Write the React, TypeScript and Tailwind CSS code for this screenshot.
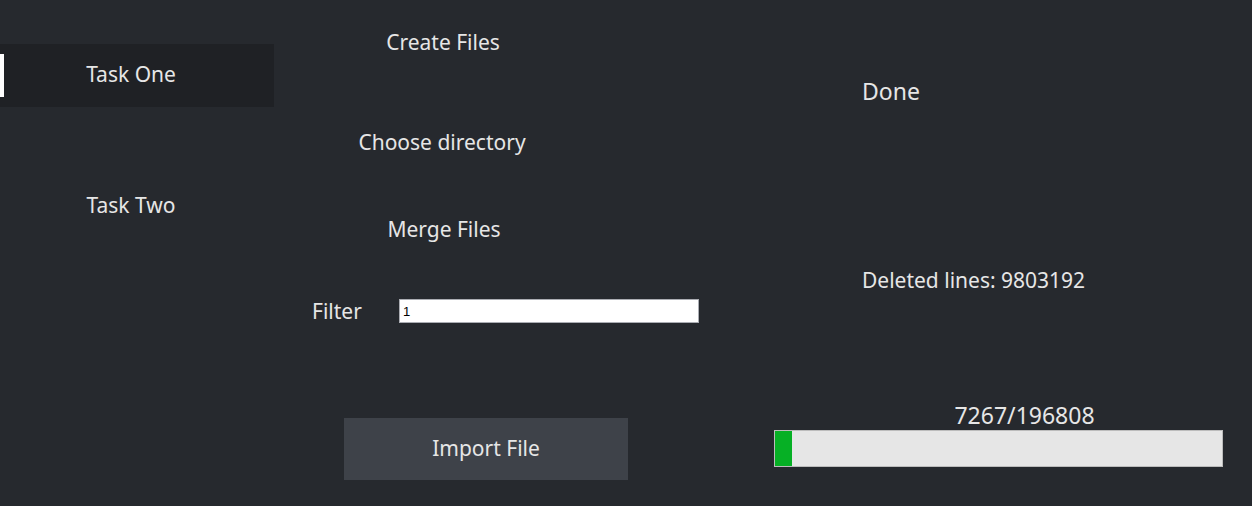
import { useState } from "react";

export default function App() {
  const [active, setActive] = useState(0);
  const [filter, setFilter] = useState("1");
  const done = 7267;
  const total = 196808;
  const pct = (done / total) * 100;

  const tasks = ["Task One", "Task Two"];

  return (
    <div
      className="flex h-[506px] w-[1252px] overflow-hidden bg-[#26292e] text-[#e6e6e6]"
      style={{ fontFamily: '"Noto Sans", "Open Sans", sans-serif' }}
    >
      {/* Sidebar */}
      <div className="flex w-[274px] shrink-0 flex-col gap-[68px] pt-[44px]">
        {tasks.map((t, i) => (
          <button
            key={t}
            type="button"
            onClick={() => setActive(i)}
            className={`relative flex h-[63px] items-center justify-center text-[21px] ${
              active === i ? "bg-[#1f2125]" : ""
            }`}
          >
            {active === i && <span className="absolute left-0 top-[10px] h-[43px] w-[4px] bg-white" />}
            <span className="-ml-[12px] -mt-[1px]">{t}</span>
          </button>
        ))}
      </div>

      {/* Middle column */}
      <div className="flex w-[500px] shrink-0 flex-col">
        <div className="w-[338px] pt-[28px] text-center text-[21px] leading-[28px]">Create Files</div>
        <div className="w-[336px] pt-[72px] text-center text-[21px] leading-[28px]">Choose directory</div>
        <div className="w-[340px] pt-[59px] text-center text-[21px] leading-[28px]">Merge Files</div>
        <div className="flex items-center pt-[54px]">
          <span className="ml-[38px] w-[87px] text-[21px] leading-[28px]">Filter</span>
          <input
            value={filter}
            onChange={(e) => setFilter(e.target.value)}
            className="h-[24px] w-[300px] border border-[#abadb3] bg-white px-[3px] text-[13px] text-black outline-none"
            style={{ fontFamily: '"Liberation Sans", Arial, sans-serif' }}
          />
        </div>
        <button
          type="button"
          className="ml-[70px] mt-[93px] h-[62px] w-[284px] bg-[#3e4249] text-[21px]"
        >
          Import File
        </button>
      </div>

      {/* Right column */}
      <div className="flex flex-1 flex-col">
        <div className="pl-[88px] pt-[76px] text-[23px] leading-[30px]">Done</div>
        <div className="pl-[88px] pt-[160px] text-[21px] leading-[28px]">Deleted lines: {9803192}</div>
        <div className="flex w-[449px] flex-col items-center pt-[107px]">
          <div className="pl-[52px] text-[23px] leading-[28px]">
            {done}/{total}
          </div>
          <div className="mt-[1px] h-[37px] w-[449px] border border-[#bcbcbc] bg-[#e6e6e6]">
            <div className="h-full bg-[#06b025]" style={{ width: `${pct}%` }} />
          </div>
        </div>
      </div>
    </div>
  );
}
